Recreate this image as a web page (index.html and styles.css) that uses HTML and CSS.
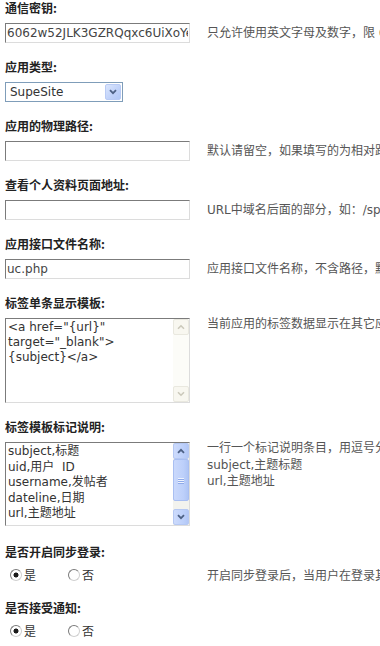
FILE: index.html
```html
<!DOCTYPE html>
<html lang="zh-CN">
<head>
<meta charset="utf-8">
<title>应用设置</title>
<link rel="stylesheet" href="styles.css">
</head>
<body>
<div class="form">
  <div class="label">通信密钥:</div>
  <div class="row">
    <div class="field"><input class="txt" type="text" value="6062w52JLK3GZRQqxc6UiXoYebUc5m2r"></div>
    <div class="help">只允许使用英文字母及数字，限 64 字节。应用端的通信密钥必须与此设置保持一致</div>
  </div>

  <div class="label">应用类型:</div>
  <div class="row">
    <div class="field">
      <div class="select"><span class="sel-text">SupeSite</span><span class="sel-btn"><svg width="8" height="6" viewBox="0 0 8 6"><path d="M1 1.2 L4 4.2 L7 1.2" fill="none" stroke="#4d6185" stroke-width="1.8"/></svg></span></div>
    </div>
    <div class="help"></div>
  </div>

  <div class="label">应用的物理路径:</div>
  <div class="row">
    <div class="field"><input class="txt" type="text" value=""></div>
    <div class="help">默认请留空，如果填写的为相对路径（相对于UC），程序会自动转换为绝对路径</div>
  </div>

  <div class="label">查看个人资料页面地址:</div>
  <div class="row">
    <div class="field"><input class="txt" type="text" value=""></div>
    <div class="help">URL中域名后面的部分，如：/space.php?uid=%s 这里的 %s 代表uid</div>
  </div>

  <div class="label">应用接口文件名称:</div>
  <div class="row">
    <div class="field"><input class="txt" type="text" value="uc.php"></div>
    <div class="help">应用接口文件名称，不含路径，默认为uc.php</div>
  </div>

  <div class="label">标签单条显示模板:</div>
  <div class="row top">
    <div class="field">
      <div class="ta">
        <textarea readonly>&lt;a href="{url}"
target="_blank"&gt;
{subject}&lt;/a&gt;</textarea>
        <div class="sb off">
          <span class="sbtn"><svg width="8" height="6" viewBox="0 0 8 6"><path d="M1 4.8 L4 1.8 L7 4.8" fill="none" stroke="#cbc9bb" stroke-width="1.6"/></svg></span>
          <span class="track"></span>
          <span class="sbtn"><svg width="8" height="6" viewBox="0 0 8 6"><path d="M1 1.2 L4 4.2 L7 1.2" fill="none" stroke="#cbc9bb" stroke-width="1.6"/></svg></span>
        </div>
      </div>
    </div>
    <div class="help">当前应用的标签数据显示在其它应用时的单条数据模板。</div>
  </div>

  <div class="label">标签模板标记说明:</div>
  <div class="row top last-ta">
    <div class="field">
      <div class="ta ta2">
        <textarea readonly>subject,标题
uid,用户  ID
username,发帖者
dateline,日期
url,主题地址</textarea>
        <div class="sb on">
          <span class="sbtn"><svg width="8" height="6" viewBox="0 0 8 6"><path d="M1 4.8 L4 1.8 L7 4.8" fill="none" stroke="#4d6185" stroke-width="1.8"/></svg></span>
          <span class="thumb"><i></i><i></i><i></i></span>
          <span class="track"></span>
          <span class="sbtn"><svg width="8" height="6" viewBox="0 0 8 6"><path d="M1 1.2 L4 4.2 L7 1.2" fill="none" stroke="#4d6185" stroke-width="1.8"/></svg></span>
        </div>
      </div>
    </div>
    <div class="help lines">
      <div>一行一个标记说明条目，用逗号分隔标记和说明文字。</div>
      <div>subject,主题标题</div>
      <div>url,主题地址</div>
    </div>
  </div>

  <div class="label">是否开启同步登录:</div>
  <div class="row radio-row">
    <div class="field">
      <label class="opt"><input type="radio" name="synlogin" checked>是</label><label class="opt"><input type="radio" name="synlogin">否</label>
    </div>
    <div class="help">开启同步登录后，当用户在登录其他应用时，同时也会登录该应用。</div>
  </div>

  <div class="label">是否接受通知:</div>
  <div class="row radio-row">
    <div class="field">
      <label class="opt"><input type="radio" name="recvnote" checked>是</label><label class="opt"><input type="radio" name="recvnote">否</label>
    </div>
    <div class="help"></div>
  </div>
</div>
</body>
</html>
```
FILE: styles.css
```css
* { box-sizing: border-box; }

html, body { overflow: hidden; }

body {
  margin: 0;
  background: #fff;
  color: #333;
  font-family: "DejaVu Sans", "Noto Sans CJK SC", sans-serif;
  font-size: 12px;
  line-height: 16px;
}

.form {
  padding-left: 5px;
}

.label {
  font-family: "Noto Sans CJK SC", sans-serif;
  font-weight: bold;
  color: #222;
  height: 16px;
  line-height: 16px;
  margin-bottom: 7px;
  white-space: nowrap;
}

.row {
  display: grid;
  grid-template-columns: 202px minmax(0, 1fr);
  align-items: center;
  margin-bottom: 16px;
}

.row.top { align-items: start; }
.row.last-ta { margin-bottom: 18px; }

.help {
  white-space: nowrap;
  overflow: hidden;
  color: #555;
  font-family: "DejaVu Sans", "Noto Sans CJK SC", sans-serif;
  line-height: 16px;
}

.row.top .help { margin-top: -2px; }

.help.lines { line-height: 16.5px; }

.txt {
  display: block;
  width: 185px;
  height: 20px;
  margin: 0;
  padding: 0 1px;
  border: 1px solid;
  border-color: #7b7b7b #dcdcdc #dcdcdc #7b7b7b;
  background: #fff;
  color: #444;
  font-family: "DejaVu Sans", "Noto Sans CJK SC", sans-serif;
  font-size: 12px;
  outline: none;
}

.select {
  width: 118px;
  height: 20px;
  border: 1px solid #7f9db9;
  background: #fff;
  display: flex;
  align-items: center;
  justify-content: space-between;
  padding: 1px;
}

.sel-text {
  padding-left: 3px;
  color: #333;
}

.sel-btn {
  width: 16px;
  height: 16px;
  border: 1px solid #b9cbf5;
  border-radius: 2px;
  background: linear-gradient(135deg, #dbe6fd 0%, #bfd1f9 60%, #b2c8f6 100%);
  display: flex;
  align-items: center;
  justify-content: center;
}

.ta {
  width: 185px;
  height: 85px;
  border: 1px solid;
  border-color: #7b7b7b #dcdcdc #dcdcdc #7b7b7b;
  background: #fff;
  display: flex;
}

.ta2 { height: 84px; }

.ta textarea {
  flex: 1;
  min-width: 0;
  margin: 0;
  border: 0;
  padding: 1px 1px 0 2px;
  resize: none;
  overflow: hidden;
  outline: none;
  background: #fff;
  color: #333;
  font-family: "DejaVu Sans", "Noto Sans CJK SC", sans-serif;
  font-size: 12px;
  line-height: 15px;
}

.ta2 textarea { line-height: 15.5px; padding-top: 1px; }

.sb {
  width: 16px;
  display: flex;
  flex-direction: column;
}

.sbtn {
  height: 16px;
  flex: none;
  display: flex;
  align-items: center;
  justify-content: center;
  border: 1px solid;
  border-radius: 2px;
}

.track { flex: 1; }

.sb.off { background: #fcfcf8; }
.sb.off .sbtn {
  background: #f8f7f0;
  border-color: #e9e8df;
}

.sb.on { background: #f3f3ee; }
.sb.on .sbtn {
  background: linear-gradient(90deg, #cddbfc 0%, #bccffa 70%, #b2c7f6 100%);
  border-color: #b5c8f3;
}

.thumb {
  height: 42px;
  flex: none;
  border: 1px solid #a9bff2;
  border-radius: 2px;
  background: linear-gradient(90deg, #cad9fc 0%, #bccffa 70%, #afc5f5 100%);
  display: flex;
  flex-direction: column;
  align-items: center;
  justify-content: center;
  gap: 1px;
}

.thumb i {
  display: block;
  width: 6px;
  height: 1px;
  background: #eef3fe;
  box-shadow: 0 1px 0 #8faaea;
}

.radio-row { height: 18px; margin-bottom: 15px; }

.opt {
  display: inline-flex;
  align-items: center;
  color: #333;
  font-family: "Noto Sans CJK SC", sans-serif;
}

.opt + .opt { margin-left: 27px; }

.opt input {
  appearance: none;
  -webkit-appearance: none;
  width: 12px;
  height: 12px;
  margin: 0 2px 0 5px;
  border: 1px solid;
  border-color: #7a7a7a #d0d0d0 #d0d0d0 #7a7a7a;
  border-radius: 50%;
  background: #fff;
}

.opt input:checked {
  background: radial-gradient(circle, #1a1a1a 0 2.2px, #fff 2.8px);
}
```
